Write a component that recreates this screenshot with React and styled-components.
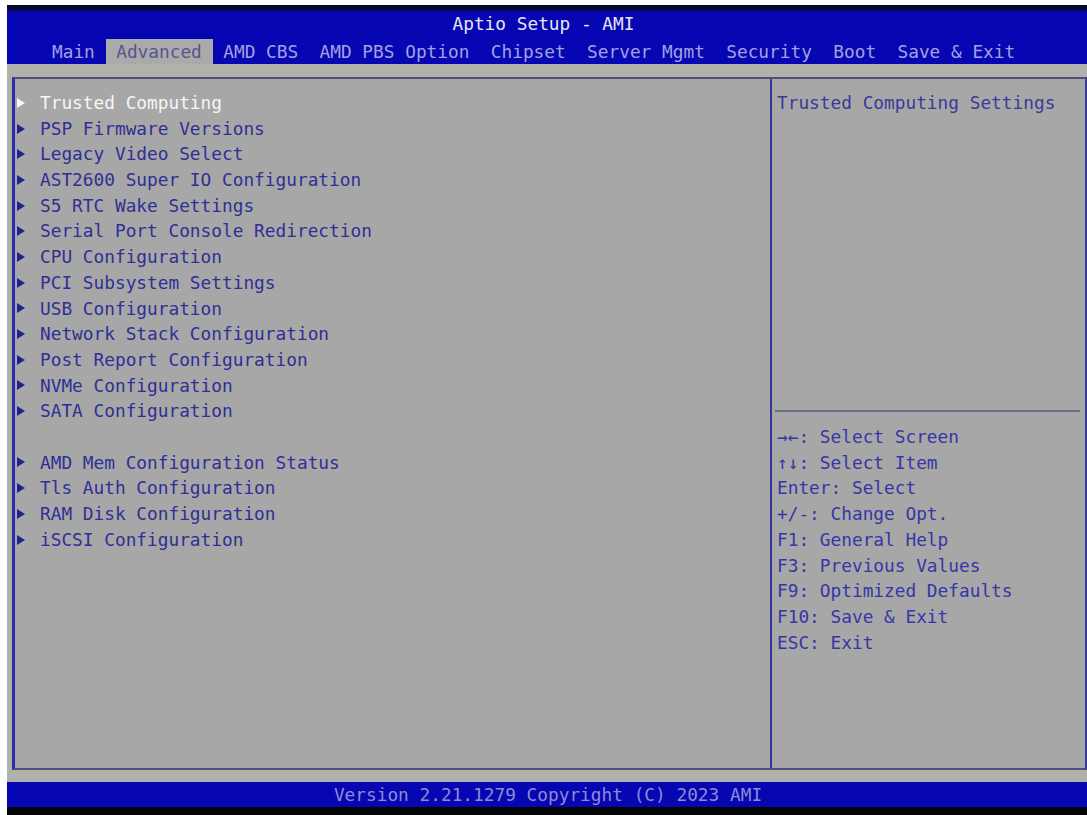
import React from "react";
import styled, { createGlobalStyle } from "styled-components";

const ROW = 25.7;
const FONT = `"DejaVu Sans Mono", "Liberation Mono", monospace`;

const Global = createGlobalStyle`
  html, body { margin: 0; padding: 0; background: #ffffff; }
  body { font-family: ${FONT}; }
`;

const Screen = styled.div`
  margin: 5px 0 0 7px;
  width: 1080px;
  height: 810px;
  display: flex;
  flex-direction: column;
  background: #a9a9a9;
  font-family: ${FONT};
  font-size: 17.8px;
  overflow: hidden;
`;

const TopEdge = styled.div`
  height: 6px;
  background: linear-gradient(#08080c, #0a0a60);
`;

const Header = styled.header`
  height: 53px;
  background: #0606b2;
  display: flex;
  flex-direction: column;
`;

const Title = styled.div`
  height: 28px;
  line-height: 26px;
  text-align: center;
  color: #e6e6f2;
  white-space: pre;
  padding-right: 7px;
`;

const TabRow = styled.nav`
  height: 25px;
  display: flex;
  align-items: stretch;
  padding-left: 34.3px;
`;

const Tab = styled.div`
  padding: 0 10.7px;
  line-height: 26px;
  white-space: pre;
  color: ${(p) => (p.$active ? "#56568e" : "#a2a2e4")};
  background: ${(p) => (p.$active ? "#aaaaaa" : "transparent")};
`;

const Body = styled.main`
  flex: 1;
  background: #b1b1ab;
  padding: 13px 0 12px 5px;
  display: flex;
`;

const Panel = styled.section`
  flex: 1;
  display: grid;
  grid-template-columns: 755px 1fr;
  background: #a7a7a7;
  border-top: 2px solid #4e4e7e;
  border-bottom: 2px solid #4e4e7e;
  border-left: 3px solid #2c2ca6;
  border-right: 2px solid #3c3c96;
`;

const MainList = styled.ul`
  list-style: none;
  margin: 0;
  padding: 11px 0 0 0;
`;

const Item = styled.li`
  height: ${ROW}px;
  line-height: ${ROW}px;
  display: flex;
  align-items: center;
  white-space: pre;
  color: ${(p) => (p.$selected ? "#f6f6f6" : "#2f2f96")};
`;

const Arrow = styled.span`
  width: 0;
  height: 0;
  margin-left: 2px;
  margin-right: 15px;
  border-top: 5px solid transparent;
  border-bottom: 5px solid transparent;
  border-left: 8px solid ${(p) => (p.$selected ? "#f6f6f6" : "#22228e")};
`;

const Spacer = styled.li`
  height: ${ROW}px;
`;

const Side = styled.aside`
  border-left: 2px solid #34349a;
  padding: 11px 0 0 5px;
  display: flex;
  flex-direction: column;
`;

const Desc = styled.div`
  height: ${ROW * 12}px;
  line-height: ${ROW}px;
  color: #3a3a98;
  white-space: pre;
`;

const Divider = styled.div`
  height: ${ROW}px;
  display: flex;
  align-items: center;
  margin: 0 5px 0 -2px;
  &::after {
    content: "";
    flex: 1;
    height: 2px;
    background: #6c6c88;
  }
`;

const HelpLine = styled.div`
  height: ${ROW}px;
  line-height: ${ROW}px;
  color: #3636a6;
  white-space: pre;
`;

const Footer = styled.footer`
  height: 25px;
  background: #0606b2;
  color: #8c8cd6;
  text-align: center;
  line-height: 26px;
  white-space: pre;
  padding-left: 2px;
`;

const BottomEdge = styled.div`
  height: 8px;
  background: #050508;
`;

const tabs = [
  "Main",
  "Advanced",
  "AMD CBS",
  "AMD PBS Option",
  "Chipset",
  "Server Mgmt",
  "Security",
  "Boot",
  "Save & Exit",
];

const items = [
  "Trusted Computing",
  "PSP Firmware Versions",
  "Legacy Video Select",
  "AST2600 Super IO Configuration",
  "S5 RTC Wake Settings",
  "Serial Port Console Redirection",
  "CPU Configuration",
  "PCI Subsystem Settings",
  "USB Configuration",
  "Network Stack Configuration",
  "Post Report Configuration",
  "NVMe Configuration",
  "SATA Configuration",
  null,
  "AMD Mem Configuration Status",
  "Tls Auth Configuration",
  "RAM Disk Configuration",
  "iSCSI Configuration",
];

const help = [
  "\u2192\u2190: Select Screen",
  "\u2191\u2193: Select Item",
  "Enter: Select",
  "+/-: Change Opt.",
  "F1: General Help",
  "F3: Previous Values",
  "F9: Optimized Defaults",
  "F10: Save & Exit",
  "ESC: Exit",
];

export default function App() {
  return (
    <>
      <Global />
      <Screen>
        <TopEdge />
        <Header>
          <Title>Aptio Setup - AMI</Title>
          <TabRow>
            {tabs.map((t) => (
              <Tab key={t} $active={t === "Advanced"}>
                {t}
              </Tab>
            ))}
          </TabRow>
        </Header>
        <Body>
          <Panel>
            <MainList>
              {items.map((it, i) =>
                it === null ? (
                  <Spacer key={i} />
                ) : (
                  <Item key={i} $selected={i === 0}>
                    <Arrow $selected={i === 0} />
                    {it}
                  </Item>
                )
              )}
            </MainList>
            <Side>
              <Desc>Trusted Computing Settings</Desc>
              <Divider />
              {help.map((h) => (
                <HelpLine key={h}>{h}</HelpLine>
              ))}
            </Side>
          </Panel>
        </Body>
        <Footer>Version 2.21.1279 Copyright (C) 2023 AMI</Footer>
        <BottomEdge />
      </Screen>
    </>
  );
}
